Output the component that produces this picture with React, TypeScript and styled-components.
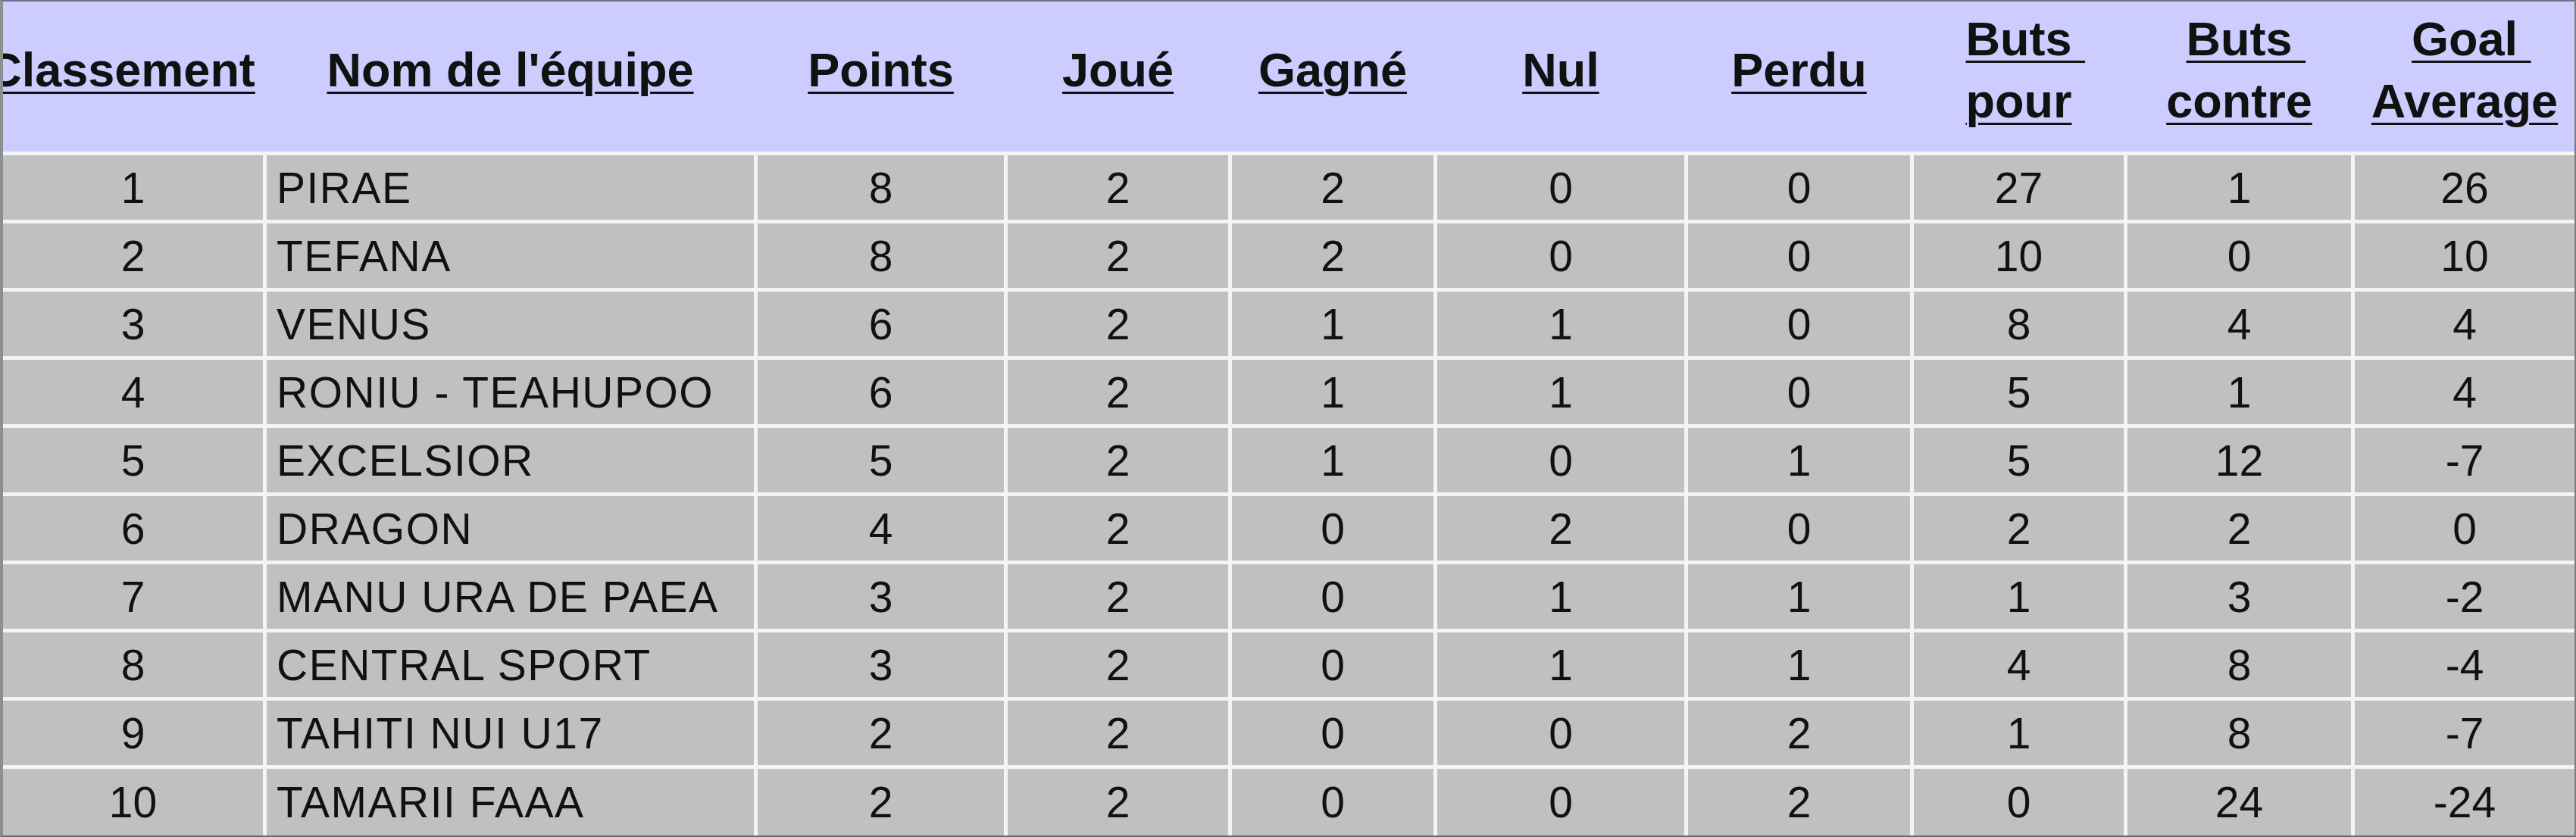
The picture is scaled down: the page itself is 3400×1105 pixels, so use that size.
import React from 'react'
import styled, { createGlobalStyle } from 'styled-components'

type Team = {
  rank: number,
  name: string,
  points: number,
  played: number,
  won: number,
  drawn: number,
  lost: number,
  goalsFor: number,
  goalsAgainst: number,
  average: number,
}

const COLUMNS = '343px 643px 325px 291px 266px 326px 293px 277px 295px 290px'

const teams: Team[] = [
  { rank: 1, name: 'PIRAE', points: 8, played: 2, won: 2, drawn: 0, lost: 0, goalsFor: 27, goalsAgainst: 1, average: 26 },
  { rank: 2, name: 'TEFANA', points: 8, played: 2, won: 2, drawn: 0, lost: 0, goalsFor: 10, goalsAgainst: 0, average: 10 },
  { rank: 3, name: 'VENUS', points: 6, played: 2, won: 1, drawn: 1, lost: 0, goalsFor: 8, goalsAgainst: 4, average: 4 },
  { rank: 4, name: 'RONIU - TEAHUPOO', points: 6, played: 2, won: 1, drawn: 1, lost: 0, goalsFor: 5, goalsAgainst: 1, average: 4 },
  { rank: 5, name: 'EXCELSIOR', points: 5, played: 2, won: 1, drawn: 0, lost: 1, goalsFor: 5, goalsAgainst: 12, average: -7 },
  { rank: 6, name: 'DRAGON', points: 4, played: 2, won: 0, drawn: 2, lost: 0, goalsFor: 2, goalsAgainst: 2, average: 0 },
  { rank: 7, name: 'MANU URA DE PAEA', points: 3, played: 2, won: 0, drawn: 1, lost: 1, goalsFor: 1, goalsAgainst: 3, average: -2 },
  { rank: 8, name: 'CENTRAL SPORT', points: 3, played: 2, won: 0, drawn: 1, lost: 1, goalsFor: 4, goalsAgainst: 8, average: -4 },
  { rank: 9, name: 'TAHITI NUI U17', points: 2, played: 2, won: 0, drawn: 0, lost: 2, goalsFor: 1, goalsAgainst: 8, average: -7 },
  { rank: 10, name: 'TAMARII FAAA', points: 2, played: 2, won: 0, drawn: 0, lost: 2, goalsFor: 0, goalsAgainst: 24, average: -24 },
]

const GlobalStyle = createGlobalStyle`
  html, body {
    margin: 0;
    padding: 0;
    overflow: hidden;
    background: #ffffff;
  }
`

const Frame = styled.div`
  box-sizing: border-box;
  width: 3400px;
  height: 1105px;
  overflow: hidden;
  border-top: 2px solid #70708a;
  border-left: 4px solid #8e8e8e;
  border-right: 2px solid #7c7c7c;
  border-bottom: 2px solid #6a6a6a;
  font-family: "Liberation Sans", Arial, sans-serif;
  color: #111111;
`

const Head = styled.div`
  display: grid;
  grid-template-columns: ${ COLUMNS };
  column-gap: 5px;
  height: 198px;
  box-sizing: border-box;
  padding-bottom: 18px;
  background-color: #ccccff;
`

const HeadCell = styled.div<{ $shift?: number }>`
  display: flex;
  align-items: center;
  justify-content: center;
  padding-right: ${ p => p.$shift || 0 }px;
  text-align: center;
  white-space: nowrap;
  font-size: 63px;
  font-weight: bold;
  line-height: 82px;
`

const HeadLink = styled.span`
  text-decoration: underline;
  text-decoration-thickness: 3px;
  text-underline-offset: 7px;
`

const Hang = styled.span`
  margin-right: -0.28em;
`

const Body = styled.div`
  display: grid;
  grid-template-columns: ${ COLUMNS };
  grid-template-rows: repeat(9, 85px) 88px;
  gap: 5px;
  padding-top: 5px;
  background-color: #f4f4f4;
`

const Cell = styled.div<{ $left?: boolean }>`
  display: flex;
  align-items: center;
  justify-content: ${ p => p.$left ? 'flex-start' : 'center' };
  padding-left: ${ p => p.$left ? '13px' : '0' };
  background-color: #c0c0c0;
  font-family: "Comic Sans MS", "Liberation Sans", Arial, sans-serif;
  font-size: 57px;
  letter-spacing: ${ p => p.$left ? '1.5px' : '0' };
  white-space: nowrap;
`

const TwoLines = ({ top, bottom }: { top: string, bottom: string }) => (
  <HeadLink>
    <Hang>{ top + '\u00a0' }</Hang>
    <br />
    { bottom }
  </HeadLink>
)

const Thead = () => (
  <Head>
    <HeadCell $shift={ 31 }><HeadLink>Classement</HeadLink></HeadCell>
    <HeadCell><HeadLink>Nom de l'équipe</HeadLink></HeadCell>
    <HeadCell><HeadLink>Points</HeadLink></HeadCell>
    <HeadCell><HeadLink>Joué</HeadLink></HeadCell>
    <HeadCell><HeadLink>Gagné</HeadLink></HeadCell>
    <HeadCell><HeadLink>Nul</HeadLink></HeadCell>
    <HeadCell><HeadLink>Perdu</HeadLink></HeadCell>
    <HeadCell><TwoLines top="Buts" bottom="pour" /></HeadCell>
    <HeadCell><TwoLines top="Buts" bottom="contre" /></HeadCell>
    <HeadCell><TwoLines top="Goal" bottom="Average" /></HeadCell>
  </Head>
)

const App = () => {
  const rowsRender = () => teams.map(team => (
    <React.Fragment key={ team.rank }>
      <Cell>{ team.rank }</Cell>
      <Cell $left>{ team.name }</Cell>
      <Cell>{ team.points }</Cell>
      <Cell>{ team.played }</Cell>
      <Cell>{ team.won }</Cell>
      <Cell>{ team.drawn }</Cell>
      <Cell>{ team.lost }</Cell>
      <Cell>{ team.goalsFor }</Cell>
      <Cell>{ team.goalsAgainst }</Cell>
      <Cell>{ team.average }</Cell>
    </React.Fragment>
  ))

  return (
    <>
      <GlobalStyle />
      <Frame>
        <Thead />
        <Body>
          { rowsRender() }
        </Body>
      </Frame>
    </>
  )
}

export default App
